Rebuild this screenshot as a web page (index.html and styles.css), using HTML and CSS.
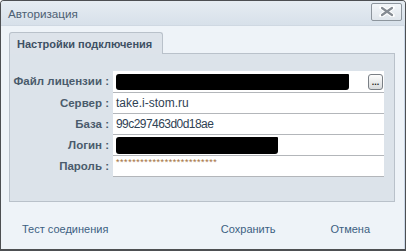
FILE: index.html
```html
<!DOCTYPE html>
<html lang="ru">
<head>
  <meta charset="UTF-8" />
  <title>Авторизация</title>
  <link rel="stylesheet" href="styles.css">
</head>
<body>
  <div class="window">
    <div class="titlebar">
      <span class="title">Авторизация</span>
      <button class="close-btn" aria-label="Закрыть">
        <svg width="16" height="11" viewBox="0 0 16 11">
          <path d="M2.5 1.5 L13.5 9.5 M13.5 1.5 L2.5 9.5" stroke="#fff" stroke-width="4.5" stroke-linecap="round"/>
          <path d="M3 2 L13 9 M13 2 L3 9" stroke="#868c93" stroke-width="2.2" stroke-linecap="round"/>
        </svg>
      </button>
    </div>
    <div class="content">
      <div class="tabs">
        <div class="tab">Настройки подключения</div>
      </div>
      <div class="panel">
        <div class="form">
          <label class="label">Файл лицензии :</label>
          <div class="field field-file">
            <span class="redacted redacted-file"></span>
            <button class="browse-btn">...</button>
          </div>
          <label class="label">Сервер :</label>
          <div class="field">take.i-stom.ru</div>
          <label class="label">База :</label>
          <div class="field field-hex">99c297463d0d18ae</div>
          <label class="label">Логин :</label>
          <div class="field"><span class="redacted redacted-login"></span></div>
          <label class="label">Пароль :</label>
          <div class="field field-pass">*************************</div>
        </div>
      </div>
      <div class="footer">
        <button class="link-btn">Тест соединения</button>
        <button class="link-btn save">Сохранить</button>
        <button class="link-btn">Отмена</button>
      </div>
    </div>
  </div>
</body>
</html>
```

FILE: styles.css
```css
body {
  margin: 0;
  font-family: 'Liberation Sans', Arial, sans-serif;
  font-size: 12px;
  background: #fff;
}
.window {
  width: 406px;
  height: 251px;
  box-sizing: border-box;
  border: 1px solid #4d4f52;
  border-bottom-width: 2px;
  border-radius: 4px 4px 0 0;
  background: #eef3f8;
  display: flex;
  flex-direction: column;
  overflow: hidden;
}
.titlebar {
  height: 24px;
  display: flex;
  align-items: center;
  justify-content: space-between;
  padding: 0 3px 0 7px;
  background: linear-gradient(#e6ecf2, #d7e0ea);
  border-bottom: 1px solid #cfd8e2;
}
.title {
  color: #4d6073;
  font-size: 11.7px;
}
.close-btn {
  width: 31px;
  height: 18px;
  margin-top: -3px;
  padding: 0;
  border: 1px solid #8d959d;
  border-radius: 2px;
  background: linear-gradient(#f3f6f9, #dfe5eb);
  display: flex;
  align-items: center;
  justify-content: center;
}
.content {
  flex: 1;
  padding: 6px 9px 0 8px;
  border-right: 1px solid #cbd8e8;
  display: flex;
  flex-direction: column;
}
.tabs {
  display: flex;
}
.tab {
  height: 22px;
  line-height: 22px;
  padding: 0 10px 0 7px;
  box-sizing: border-box;
  background: #dde3ea;
  border: 1px solid #b9c1ca;
  border-bottom: none;
  border-radius: 3px 3px 0 0;
  font-size: 11px;
  font-weight: bold;
  color: #3e5064;
  margin-bottom: -1px;
  position: relative;
  z-index: 1;
}
.panel {
  height: 149px;
  box-sizing: border-box;
  background: #dce3ea;
  border: 1px solid #b9c1ca;
  padding: 17px 10px 0 0;
}
.form {
  display: grid;
  grid-template-columns: 99px 1fr;
  column-gap: 4px;
}
.label {
  text-align: right;
  font-size: 11.5px;
  font-weight: bold;
  color: #4a5b6c;
  line-height: 21px;
  white-space: nowrap;
}
.field {
  height: 21px;
  box-sizing: border-box;
  background: #fff;
  border-bottom: 1px solid #b3b6ba;
  padding: 0 3px;
  line-height: 20px;
  color: #2f4254;
  display: flex;
  align-items: center;
}
.field-file {
  height: 22px;
  justify-content: space-between;
  padding-right: 1px;
}
.field-hex {
  letter-spacing: -0.55px;
}
.field-pass {
  font-size: 9px;
  color: #a26f3a;
  align-items: flex-start;
  line-height: 12px;
  letter-spacing: 0.55px;
}
.redacted {
  display: inline-block;
  background: #000;
  border-radius: 3px 1px 3px 3px;
}
.redacted-file {
  width: 233px;
  height: 16px;
}
.redacted-login {
  width: 162px;
  height: 17px;
}
.browse-btn {
  width: 15px;
  height: 16px;
  padding: 0;
  border: 1px solid #7a7f85;
  border-radius: 3px;
  background: linear-gradient(#fdfdfd, #d8dadc);
  font-size: 9px;
  font-weight: bold;
  line-height: 10px;
  color: #222;
  font-family: 'Liberation Sans', Arial, sans-serif;
}
.footer {
  flex: 1;
  display: flex;
  align-items: center;
  padding: 7px 25px 0 13px;
}
.link-btn {
  background: none;
  border: none;
  padding: 0;
  font-family: 'Liberation Sans', Arial, sans-serif;
  font-size: 11px;
  color: #3c5f82;
  cursor: pointer;
}
.save {
  margin-left: auto;
  margin-right: 55px;
}
```
